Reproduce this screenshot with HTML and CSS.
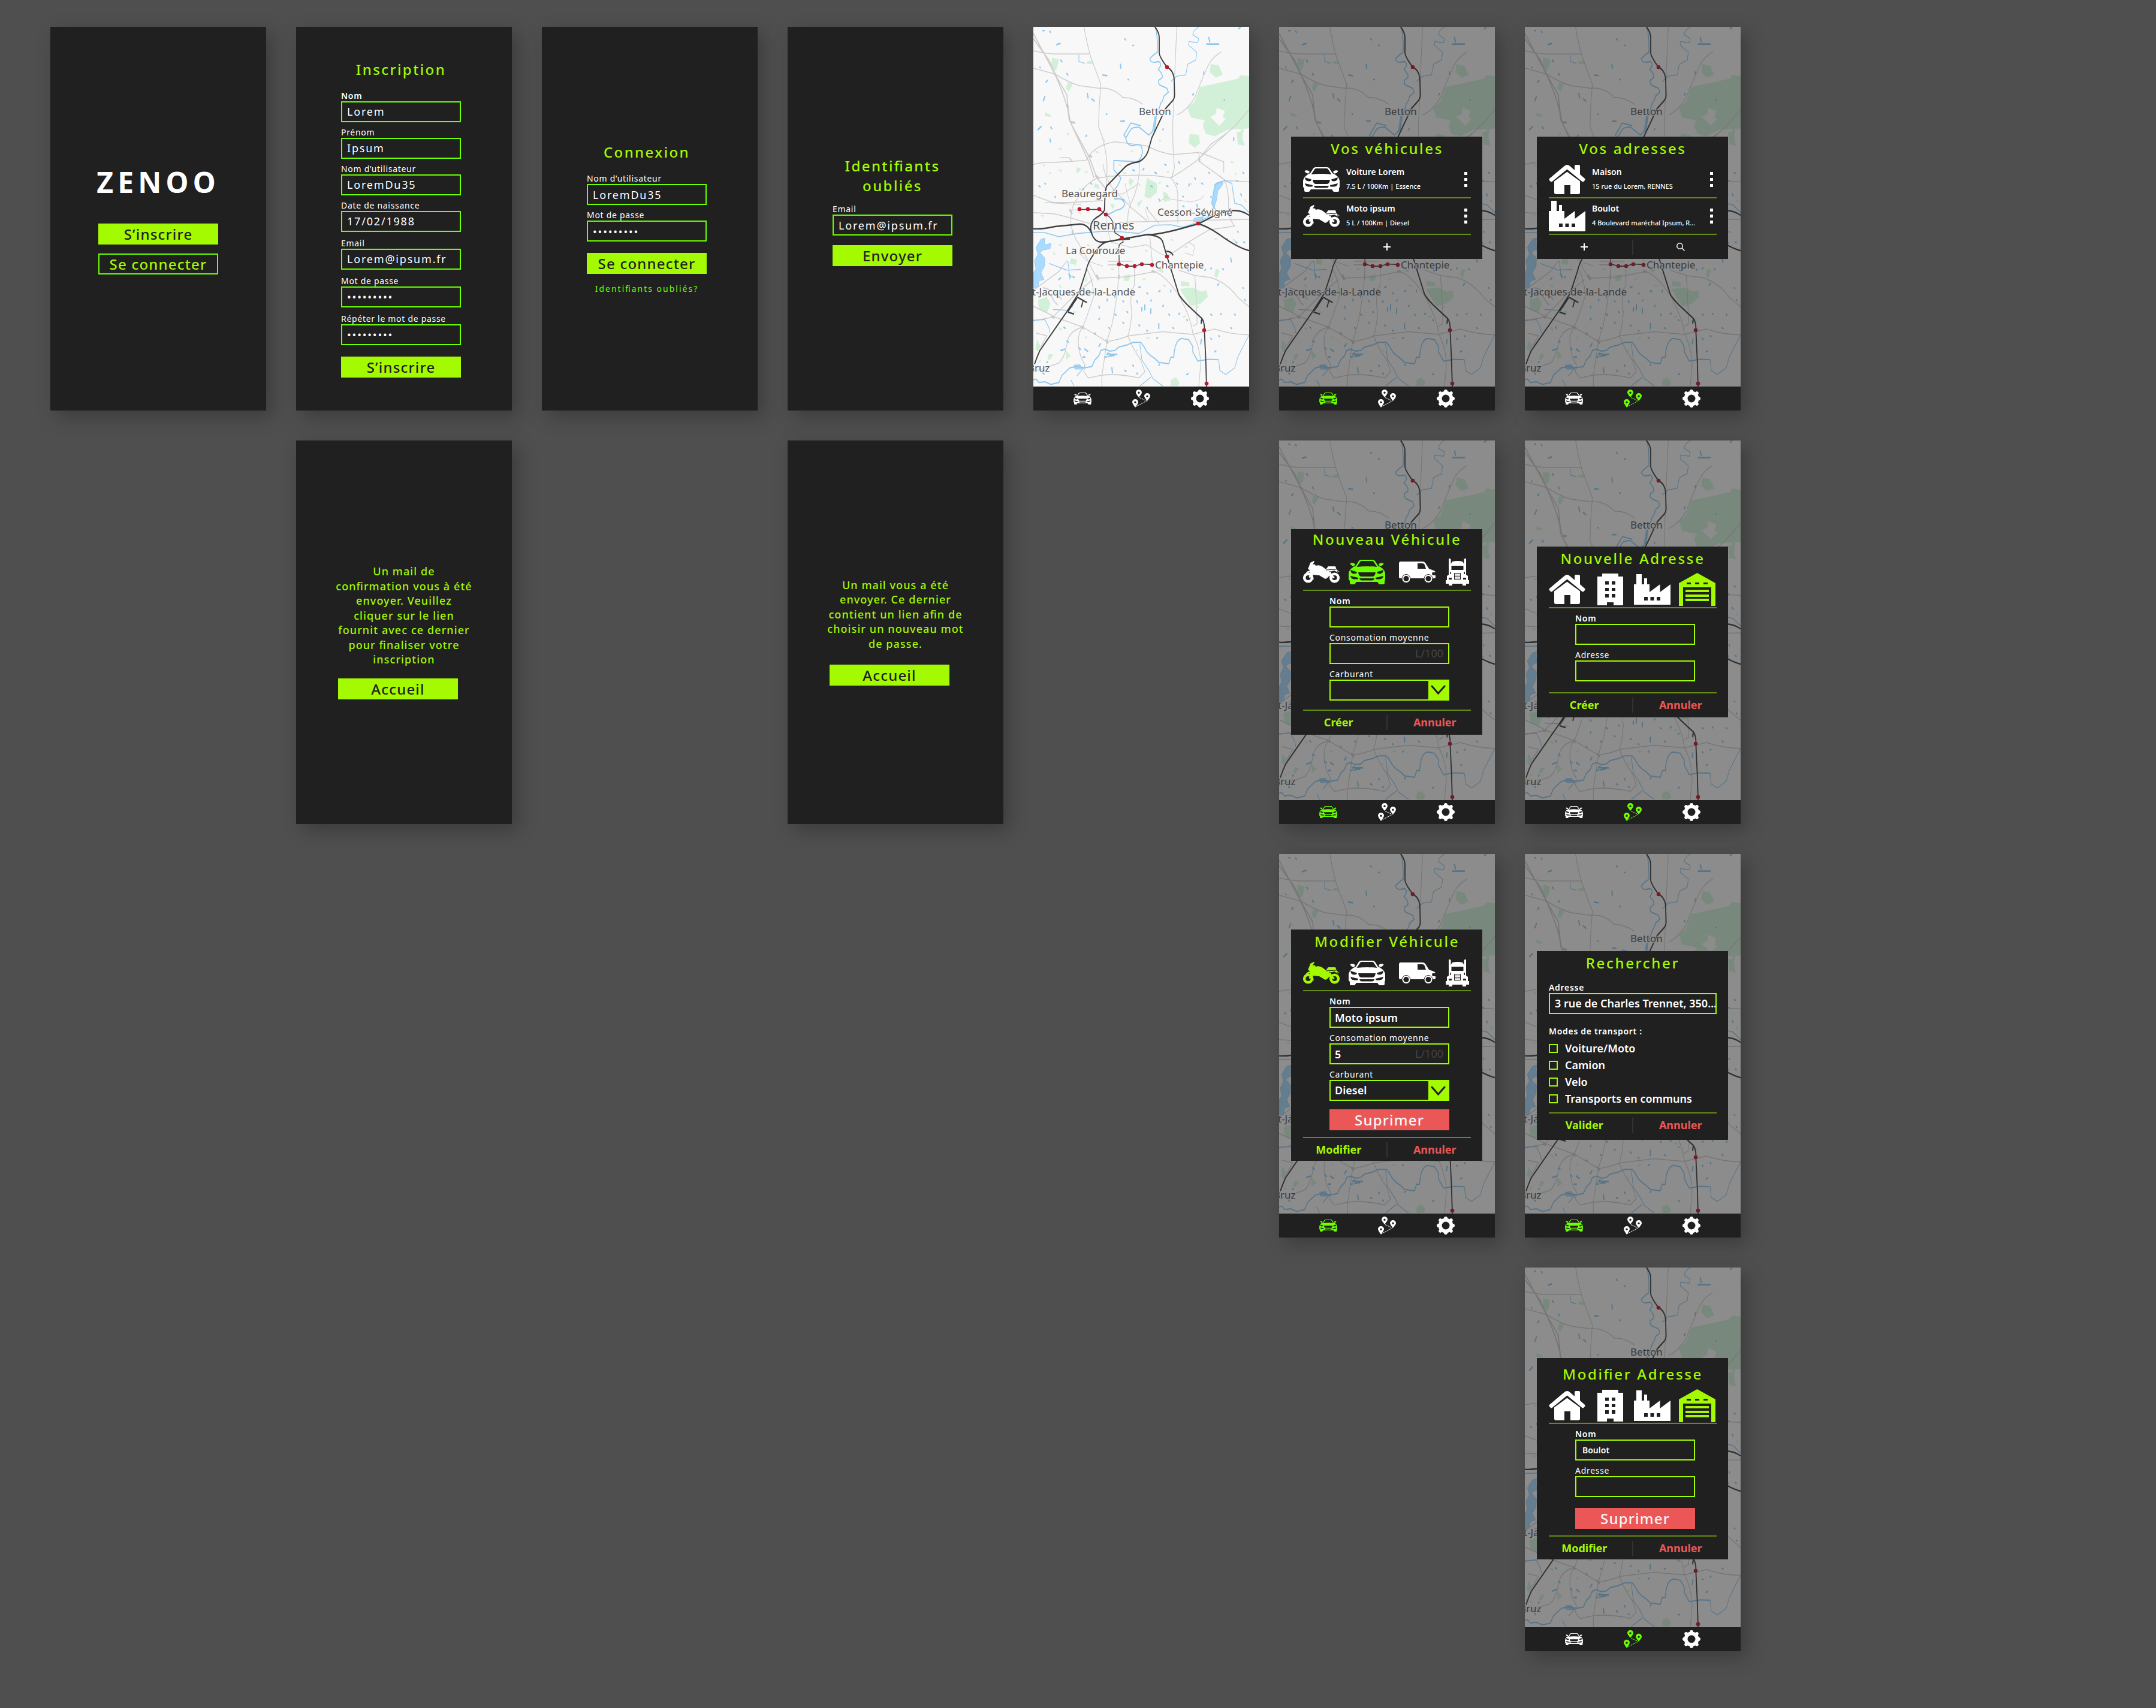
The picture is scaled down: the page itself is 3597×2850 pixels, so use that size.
FILE: index.html
```html
<!DOCTYPE html>
<html lang="fr">
<head>
<meta charset="utf-8">
<meta name="viewport" content="width=device-width, initial-scale=1">
<title>Zenoo</title>
<link rel="stylesheet" href="styles.css">
</head>
<body>
<svg class="sprite" aria-hidden="true">
  <symbol id="i-car" viewBox="0 0 61 41">
    <path fill="currentColor" d="M8 12L12 10L17 2Q18.500 0 21 0H40Q42.500 0 44 2L49 10L53 12L57 15Q61 19 61 24V33L60 35V39Q60 41 58 41H52Q50 41 49.500 39L48 37H13L11.500 39Q11 41 9 41H4Q2 41 2 39V35L0 33V24Q0 19 4 15Z"/>
    <path fill="currentColor" d="M2.500 6.500Q3.500 5 6 5.200Q10 5.500 11 8L9 10.500Q5 11 2.500 6.500ZM58.500 6.500Q57.500 5 55 5.200Q51 5.500 50 8L52 10.500Q56 11 58.500 6.500Z"/>
    <path fill="#202020" d="M13.500 12L19.500 3Q20.500 2 22 2H39Q40.500 2 41.500 3L47.500 12Q31 10 13.500 12ZM3 17L14 20.500Q13.500 23.500 10 23.500Q6 23.500 4 21ZM58 17L47 20.500Q47.500 23.500 51 23.500Q55 23.500 57 21ZM16 21H45Q44 28 40 28H21Q17 28 16 21ZM3 27L16 30L15.500 32.500H9Q4 32 3 27ZM58 27L45 30L45.500 32.500H52Q57 32 58 27ZM18 31H43Q42 34.500 39 34.500H22Q19 34.500 18 31Z"/>
  </symbol>
  <symbol id="i-moto" viewBox="0 0 61 37">
    <circle cx="8.500" cy="28" r="6.300" fill="none" stroke="currentColor" stroke-width="4.500"/>
    <circle cx="52.500" cy="28" r="6.300" fill="none" stroke="currentColor" stroke-width="4.500"/>
    <path fill="currentColor" d="M18 0L19 1L16 6Q18 5 20 6L21 8Q28 6 33 10L38 14L42 9H54L56 15L61 18L56 17L59 20L52 16L46 18L48 22L44 24Q41 29 37 30L27 24L16 23L18 31L14 28L10 24L12 19L4 21Q7 16 12 16L8 13L10 9L12 3Z"/>
    <path d="M10 27L16 24M44 23L52 28" stroke="currentColor" stroke-width="3"/>
    <path d="M38 15L55 14M43 18L50 18" stroke="#202020" stroke-width="1"/>
  </symbol>
  <symbol id="i-van" viewBox="0 0 61 35">
    <path fill="currentColor" d="M3 0H39Q43 0 45 4L50 12L58 15Q61 16 61 19V26Q61 28 58 28H2Q0 28 0 26V3Q0 0 3 0Z"/>
    <path fill="#202020" d="M31 3H39Q42 3 43 6L45 12H31ZM56 18H61V23H58Q55 23 55 20Z"/>
    <g fill="currentColor" stroke="#202020"><circle cx="12" cy="28.500" r="7"/><circle cx="49" cy="28.500" r="7"/></g>
    <g fill="#202020"><circle cx="12" cy="28.500" r="4.500"/><circle cx="49" cy="28.500" r="4.500"/></g>
  </symbol>
  <symbol id="i-truck" viewBox="0 0 39 45">
    <path fill="currentColor" d="M5 0H7L8.500 1V9L11 5Q20 3 28 5L30.500 9V1L32 0H34V27L37 29V36H39V42H34V45H28V42H11V45H5V42H0V36H2V29L5 27Z"/>
    <path fill="#202020" d="M9.500 12H29.500V19H9.500ZM7 22H8.500V26H7ZM30.500 22H32V26H30.500ZM5 32H10V35H5ZM29 32H34V35H29Z"/>
    <path d="M14.500 24.500H24.500V35H14.500ZM14.500 27.500H24.500M14.500 30H24.500M14.500 32.500H24.500" fill="none" stroke="#202020" stroke-width="1"/>
  </symbol>
  <symbol id="i-house" viewBox="0 0 61 49">
    <path fill="currentColor" d="M9 25L30.500 7L52 25V46Q52 49 49 49H36V34H26V49H12Q9 49 9 46Z"/>
    <path d="M2.500 26.500L30.500 6L58.500 26.500" fill="none" stroke="#202020" stroke-width="9"/>
    <path fill="currentColor" d="M1 23L26 2Q30.500 -2 35 2L43 9V2Q43 0 45 0H50Q52 0 52 2V16L60 23Q61 24.500 60 26L58 28Q57 29 55.500 28L30.500 7.500L5.500 28Q4 29 3 28L1 26Q0 24.500 1 23Z"/>
  </symbol>
  <symbol id="i-building" viewBox="0 0 43 53">
    <path fill="currentColor" fill-rule="evenodd" d="M0 5H8V0H35V5H43V53H27V48H16V53H0ZM13 13V18.500H19V13ZM24 13V18.500H30V13ZM13 24V29H19V24ZM24 24V29H30V24ZM13 34V40H19V34ZM24 34V40H30V34Z"/>
  </symbol>
  <symbol id="i-factory" viewBox="0 0 61 51">
    <path fill="currentColor" fill-rule="evenodd" d="M0 17H4V0H13V17H17V7H22V17H26V30L43.500 17V30L61 17V51H0ZM17 38V44H23V38ZM27.500 38V44H33.500V38ZM38 38V44H44V38Z"/>
  </symbol>
  <symbol id="i-garage" viewBox="0 0 61 55">
    <path fill="currentColor" fill-rule="evenodd" d="M30.500 0L61 17V55H54V24H7V55H0V17ZM13 16V19H20V16ZM27 16V19H34V16ZM41 16V19H48V16ZM11 28H50V32H11ZM11 36H50V40H11ZM11 43H50V47H11Z"/>
  </symbol>
  <symbol id="i-pins" viewBox="0 0 30 30">
    <path fill="currentColor" fill-rule="evenodd" d="M11 13Q6 7 6 5A5 5 0 0 1 16 5Q16 7 11 13ZM11 3.500A1.700 1.700 0 1 0 11 7A1.700 1.700 0 1 0 11 3.500ZM25 19Q20 13 20 11A5 5 0 0 1 30 11Q30 13 25 19ZM25 9.500A1.700 1.700 0 1 0 25 13A1.700 1.700 0 1 0 25 9.500ZM5 30Q0 23 0 21A5 5 0 0 1 10 21Q10 23 5 30ZM5 19.500A1.700 1.700 0 1 0 5 23A1.700 1.700 0 1 0 5 19.500Z"/>
    <path d="M12 13.500L24 19L6 28.500" fill="none" stroke="currentColor" stroke-dasharray="3 1"/>
  </symbol>
  <symbol id="i-gear" viewBox="0 0 30 30">
    <circle cx="15" cy="15" r="9.500" fill="none" stroke="currentColor" stroke-width="6"/>
    <g stroke="currentColor" stroke-width="6" stroke-linecap="round"><path d="M15 3V4M15 26V27M3 15H4M26 15H27"/><path stroke-width="5.500" d="M6 6L7 7M24 6L23 7M6 24L7 23M24 24L23 23"/></g>
  </symbol>
  <symbol id="i-plus" viewBox="0 0 12 12"><path d="M6 0V12M0 6H12" stroke="currentColor" stroke-width="2"/></symbol>
  <symbol id="i-search" viewBox="0 0 14 14"><circle cx="5.500" cy="5.500" r="4.700" fill="none" stroke="currentColor" stroke-width="1.500"/><path d="M9 9L13.500 13.500" stroke="currentColor" stroke-width="1.500"/></symbol>
  <symbol id="i-dots" viewBox="0 0 5 25"><path fill="currentColor" d="M0 0H5V5H0ZM0 10H5V15H0ZM0 20H5V25H0Z"/></symbol>
  <symbol id="i-chevron" viewBox="0 0 25 16"><path d="M2 2L12.500 14L23 2" fill="none" stroke="currentColor" stroke-width="3" stroke-linecap="round"/></symbol>

  <symbol id="map" viewBox="0 0 360 600">
    <rect width="360" height="600" fill="#f8f8f8"/>
    <g transform="scale(.33333 .44643) translate(-72 -56)">
      <g fill="#d2f0d8">
        <path d="M905 280L1020 262L1095 250L1110 235L1152 240V435L1045 440L980 465L935 455L920 425L930 405L860 395L843 358L880 335Z"/>
        <path fill="#f8f8f8" d="M990 358L1030 370L1020 395L1036 400L1003 425L958 392L985 382Z"/>
        <path d="M960 195L1000 200L1020 235L985 245L955 225ZM855 455L900 460L907 490L880 508L850 490ZM165 170L200 178L190 210L175 225L162 195ZM245 262L270 268L250 298L235 285ZM1090 450L1120 445V475L1130 500L1095 495ZM640 620L690 640L690 675L655 698L628 690ZM805 1035L870 1030L910 1045L940 1040L945 1065L910 1090L860 1100L830 1065ZM810 1005L850 1010L855 1025L810 1025ZM95 1075L140 1065L158 1090L140 1125L100 1110ZM525 985L560 980L550 1005L525 1005ZM760 1375L785 1365L805 1385L795 1398H760ZM90 1225L110 1250L95 1270L82 1258ZM985 960L1005 965L990 995L978 985ZM340 185L370 182L372 195H340ZM555 620L575 630L560 650L548 640ZM720 670L745 680L755 705L725 710ZM235 1265L260 1285L235 1300ZM150 1278L172 1280L155 1300H142ZM380 640L400 645V662L375 655ZM290 580L310 585L300 600H285ZM590 715L620 700L600 730ZM260 920L290 925L285 945L255 940ZM455 715L480 720L470 738ZM700 960H722V975L700 970ZM1110 420L1120 410L1125 450H1112ZM130 375L160 385V392L130 390Z"/>
      </g>
      <g fill="#a9daff" stroke="#8cc6ee" stroke-width="2">
        <path d="M110 850L130 845L128 870L160 865L155 885L120 890L105 900L130 920L128 950L110 975L125 1000L100 1005L95 1030L72 1035V975L85 960L78 930L95 905L85 880Z"/>
        <path d="M985 640L1015 632L1022 642L995 670L990 700L975 735L965 715L975 680ZM680 390L688 395L680 440L668 445ZM880 770L925 765L910 785L870 782ZM275 1320L305 1318L320 1335H280Z"/>
      </g>
      <path d="M120 1030L180 1045L215 1075M160 1060L180 1085L195 1095" fill="none" stroke="#d3d0e4" stroke-width="5"/>
      <g fill="none" stroke="#cdcdcd" stroke-width="3.500">
        <path stroke-width="5" d="M72 80L180 232L240 310Q248 390 262 420L350 540L390 620L440 665M72 100L150 180L180 232Q250 350 250 400L350 560L375 620"/>
        <path d="M72 145Q130 155 180 157H352M326 56Q340 120 360 170Q390 230 410 270Q400 350 398 430Q430 480 440 560Q442 620 436 660M72 210L180 232Q240 260 300 275L400 285Q470 280 520 320Q570 318 620 345"/>
        <path d="M790 56L782 190L772 380Q765 470 778 580Q770 610 762 620M1012 150Q960 170 935 220Q900 280 880 320Q840 370 790 385M1152 365Q1080 430 1045 450L960 495L905 545Q880 565 760 620Q680 610 600 610L490 612L395 620Q330 640 290 700Q255 730 260 800L285 850Q330 900 365 960L390 995L540 990L680 970Q740 990 800 1060Q860 1140 870 1200Q915 1270 908 1330L900 1400"/>
        <path d="M72 570Q120 560 180 562L335 555Q370 500 480 485L640 500Q700 525 770 533L900 525L905 560L1025 625Q1055 665 1048 740Q1055 780 1080 800M1025 600V560L905 525M905 560L1035 630L1152 635M1045 450L905 545"/>
        <path d="M72 685Q140 705 170 712H260L420 705M72 750L180 755L260 770L360 792Q450 790 540 785L820 780L1152 775M640 735L700 790M760 620Q790 640 795 680V790M605 565Q600 650 570 700Q540 740 545 790M420 570Q430 620 470 660L560 730L640 780"/>
        <path d="M72 1155L170 1140L290 1050L370 1000M72 1100Q130 1120 180 1140L320 1178L440 1232Q500 1225 550 1210L720 1195L870 1205L980 1185Q1060 1205 1152 1207"/>
        <path d="M500 900V990Q490 1080 465 1170L440 1232L415 1360V1400M578 955V1020Q550 1060 565 1120Q560 1180 545 1210Q570 1260 610 1300L630 1345M340 960Q370 1000 375 1060Q340 1140 320 1178Q280 1210 310 1290L330 1320L325 1345L348 1368L410 1358Q500 1350 600 1368L630 1345"/>
        <path d="M800 965L880 985L960 993Q1040 1010 1100 1070L1152 1102M880 985L885 1040L892 1165L870 1175M741 914L870 850L950 815L1080 800M85 1200L140 1210L110 1250M320 1178Q250 1190 240 1240Q230 1290 200 1312L72 1345M72 1040L200 970L240 930M445 932H560M445 945H520M655 840L670 955"/>
        <path stroke-width="2.500" d="M262 740H310V720M440 740V800L460 860L560 880L640 870M700 710L740 690L760 700L860 710L910 700L925 685M830 900L870 910L880 875L850 860M130 712L260 718L310 720M440 680H520L600 640M630 735L650 780M300 900L340 930L420 950M640 870L700 900L741 914M530 640L560 730"/>
        <path stroke-width="9" stroke-linecap="round" d="M178 230l4 4M262 412l16 2M350 538l12 2M385 612l12 8M256 740l8 12M268 820v8M390 985l8 14M500 985v10M436 1228l8 8M316 1176l8 6M165 1140l10 2M903 545v12M668 968l10 4"/>
      </g>
      <g fill="none" stroke="#8fc8ef" stroke-width="4.500" stroke-linejoin="round">
        <path d="M683 56Q695 90 693 150Q665 165 655 175Q660 195 700 185Q720 195 697 215Q720 230 717 245L700 255Q695 270 710 275L740 285L748 300L725 315Q720 335 710 340L700 365L685 395L678 440L650 460L600 430Q560 430 555 445L535 470L525 460L560 415L610 425M535 470Q540 500 570 500Q615 485 618 520Q615 550 590 560L475 555V590L510 620Q500 650 470 670L480 700Q520 690 530 720Q515 740 490 740L440 760"/>
        <path stroke-width="3.500" d="M72 825L130 825L200 840L290 828L420 820L520 822L600 828L680 797L760 795L820 805L900 785L960 760L985 740L965 715L980 645L1030 630L1065 640L1080 715L1115 722L1152 750"/>
        <path d="M72 1375L85 1372L100 1385L130 1382L160 1392L200 1385L215 1358L240 1340L255 1330L290 1325L330 1330L365 1325L380 1300L400 1285L410 1265L430 1260L455 1268L480 1265L500 1252L540 1245L570 1235L610 1235L625 1250L640 1270L660 1285L680 1295L700 1310L750 1315L760 1290L775 1290Q780 1225 815 1220L850 1225L870 1250V1270L895 1305L950 1298L1000 1300"/>
        <path stroke-width="3" d="M1000 1300L1005 1340L1035 1355L1080 1330L1095 1290L1125 1245L1152 1207M900 56Q870 70 870 85L900 100L895 115L850 110V125L890 150L885 180L845 195L835 235L790 240L760 260M605 1240L615 1300L650 1340L670 1370L720 1398M605 1398L660 1365M72 1152L130 1150L150 1180L155 1200M170 1112L240 1115L270 1100M300 160V185L330 192M208 545L250 545L265 555M150 940L240 965L310 962M245 930L255 1000M290 1360L330 1325M260 1375L275 1398"/>
      </g>
      <path fill="none" stroke="#8fc8ef" stroke-width="6" stroke-linecap="round" d="M120 70h6M155 72l3 4M188 122l18-4M136 262l6-6M130 316l-8 16M95 440l16-12M105 206l2 2M210 180l5 6M240 230l4 6M420 236l20 2M508 196l2 14M546 253h3M530 100l4 4M570 125h4M342 305l4 16M365 325l12 8M437 382h3M240 348l4 4M940 120h60M1100 62l8-4M950 95l5 16M925 225v8M870 310l4-5M1027 330h2M510 408h18M720 440l3-3M155 475l3 10M335 465l4-4M160 430l4 6M570 590l8 3M620 590l5-4M680 600l8 3M730 570l6 2M800 560l4 6M880 620l3 4M915 640l5 3M850 650l3-6M790 640l4 3M740 650l6 2M820 690h4M860 740l-5 16M740 745l12 3M700 700l4 3M950 600l4 3M1090 630l6 2M1110 680l4 6M1120 600l5 3M1075 470v10M1060 920l3 14M1095 820l2 3M1085 860l6 3M1125 860l5 2M1040 850l4-2M1020 960l4 3M960 960l3-3M930 965l4-3M845 965l5 3M600 1030l8-3M560 1045l4-8M480 1050v16M640 1050l4 3M700 1045l6-3M760 1040v6M660 1080l3-3M590 1080l3 6M520 1080l4 3M440 1080l3-6M400 1100l3 6M660 1110v16M630 1095v18M615 1105v12M540 1120l4 3M480 1130l6 3M750 1130l4 3M720 1100l4-3M800 1130l4-4M840 1150l3 3M700 1165v18M770 1180l5 3M690 1220l4-3M640 1190l3 3M600 1170l4 3M520 1160l4 3M400 1150l3-5M450 1180l3 3M380 1200l3 3M225 1178l6 4M330 1260l14 8M400 1250l8-10M430 1290l40-6M440 1280l50 0M445 1275l30 10M465 1330l3 18M530 1340l6 3M570 1320l3 4M700 1320l3-3M590 1350l4 3M840 1355l6-3M980 1270l6-3M910 1240l3-16M960 1220l4 3M1000 1210l3 3M1060 1180l4 3M1080 1130l3 3M1010 1130l3-3M960 1130l5 3M1120 1030l3 3M1130 1075l3 3M320 1290l10 0M300 1255l8 6M210 1265l20-5M240 1230l8 4M120 1350l5 3M140 1310l3-3M190 1060l8 5M230 1050l3-3M200 1000l8-6M250 980l10 10M270 990l6 2M1000 1015l-5 6M910 1155l4 3M960 690l3 3M890 720l3 8M820 725l6 3M660 650l8 4M640 730l3 3M520 700l6 3M360 640l4 3M320 660l3 3M130 640l3 3M100 650l6 3M180 690l3 3"/>
      <path fill="none" stroke="#d0f0d5" stroke-width="6" d="M500 570l12 4M520 600l18 4M570 660l8-8M600 640l6 10M700 640l10-3M740 600l12-4M820 590l-8 10M860 640l6 5M450 610l12 6M330 600l14-4M300 660l12 6M200 590l14 6M150 600l10 3M120 575l10-3M380 520l20 6M420 470l10 16M200 510l14 3M240 460l12-8M560 520l14 3M700 480l10 3M1060 560l14 3M1080 600l8 8M950 540l12-3M130 700l12 4M110 760l14 3M300 750l10 3M340 990l-8 20M460 960l16 3M620 1000l12-3M200 1020l12 10M270 1120l14 3M200 1180l14 8M330 1220l10-6M100 1310l8-8M440 1290l12-10M580 1270l14-6M640 1220l14-3M820 1140l14-3M880 1100l20 3M720 1020l14 6M760 850l14 4M830 880l14-3M980 850l12-4M1070 850l14 6M1130 700l8 12M1010 740l14 6M560 930l10 4M630 890l14 4M340 870l14 3M200 870l16 3M170 900l12 6"/>
      <g fill="none" stroke="#404040" stroke-width="5.500" stroke-linejoin="round">
        <path d="M680 56Q703 75 702 100V150Q700 165 740 205Q778 220 777 260L779 310Q779 325 765 335L735 360Q700 415 665 470L650 510Q640 545 600 560Q550 565 530 580L440 650Q430 665 430 700L428 740Q420 755 385 770Q355 785 360 815Q370 858 410 860Q440 860 470 855L640 832Q680 835 800 812L898 792L960 768Q1080 720 1152 760"/>
        <path d="M72 810Q110 813 180 802L300 793Q345 790 365 830M898 792Q940 800 1000 830Q1090 880 1152 892M440 858Q400 870 370 910Q345 935 335 970L300 1050L240 1120L105 1265Q90 1290 78 1316M640 832Q710 835 720 860L741 914L800 1055Q810 1070 850 1100L915 1145Q930 1160 928 1190L935 1300L939 1400M292 1066L340 1086M322 1076L312 1104M245 1122L276 1129M738 895Q760 893 772 910M915 1148L912 1166"/>
        <path stroke-width="8" d="M500 850L555 847M290 1068L245 1118"/>
        <path stroke-width="3.500" d="M304 738H402L435 757Q475 770 480 825L517 843L522 860Q500 865 500 880L502 942L540 950H580L614 942L666 944"/>
      </g>
    </g>
    <g fill="#c2172f"><circle cx="223" cy="67" r="3.300"/><circle cx="77" cy="304" r="3.300"/><circle cx="91" cy="304" r="3.300"/><circle cx="110" cy="304" r="3.300"/><circle cx="121" cy="313" r="3.300"/><circle cx="148" cy="352" r="3.300"/><circle cx="143" cy="396" r="3.300"/><circle cx="156" cy="399" r="3.300"/><circle cx="169" cy="399" r="3.300"/><circle cx="181" cy="396" r="3.300"/><circle cx="198" cy="397" r="3.300"/><circle cx="275" cy="328" r="3.300"/><circle cx="223" cy="383" r="3.300"/><circle cx="285" cy="506" r="3.300"/><circle cx="289" cy="595" r="3.300"/></g>
  </symbol>
</svg>

<main class="board">
  <section class="screen form-screen c1 r1">
    <h1 class="brand">ZENOO</h1>
    <div class="actions">
      <button class="btn" type="button">S’inscrire</button>
      <button class="btn btn-outline" type="button">Se connecter</button>
    </div>
  </section>

  <form class="screen form-screen shifted c2 r1">
    <h2 class="title">Inscription</h2>
    <div class="fields">
      <div class="field"><label class="strong" for="s-nom">Nom</label><input id="s-nom" type="text" value="Lorem"></div>
      <div class="field"><label for="s-prenom">Prénom</label><input id="s-prenom" type="text" value="Ipsum"></div>
      <div class="field"><label for="s-user">Nom d’utilisateur</label><input id="s-user" type="text" value="LoremDu35"></div>
      <div class="field"><label for="s-date">Date de naissance</label><input id="s-date" type="text" value="17/02/1988"></div>
    </div>
    <div class="fields account">
      <div class="field"><label for="s-mail">Email</label><input id="s-mail" type="email" value="Lorem@ipsum.fr"></div>
      <div class="field"><label for="s-pass">Mot de passe</label><input id="s-pass" type="password" value="motdepass"></div>
      <div class="field"><label for="s-pass2">Répéter le mot de passe</label><input id="s-pass2" type="password" value="motdepass"></div>
    </div>
    <button class="btn after-fields" type="button">S’inscrire</button>
  </form>

  <form class="screen form-screen shifted c3 r1">
    <h2 class="title">Connexion</h2>
    <div class="fields">
      <div class="field"><label for="l-user">Nom d’utilisateur</label><input id="l-user" type="text" value="LoremDu35"></div>
      <div class="field"><label for="l-pass">Mot de passe</label><input id="l-pass" type="password" value="motdepass"></div>
    </div>
    <button class="btn after-fields" type="button">Se connecter</button>
    <a class="forgot" href="#oublies">Identifiants oubliés?</a>
  </form>

  <form class="screen form-screen shifted recover c4 r1" id="oublies">
    <h2 class="title">Identifiants oubliés</h2>
    <div class="fields">
      <div class="field"><label for="r-mail">Email</label><input id="r-mail" type="email" value="Lorem@ipsum.fr"></div>
    </div>
    <button class="btn" type="button">Envoyer</button>
  </form>

  <section class="screen c5 r1">
    <svg class="map" viewBox="0 0 360 600" role="img" aria-label="Carte de Rennes"><use href="#map"/>
      <text x="176" y="147">Betton</text><text x="47" y="284">Beauregard</text><text x="207" y="315">Cesson-Sévigné</text><text class="city" x="99" y="338">Rennes</text><text x="54" y="379">La Courouze</text><text x="203" y="403">Chantepie</text><text x="-2" y="448">t-Jacques-de-la-Lande</text><text x="-9" y="575">Bruz</text>
    </svg>
    <nav class="tabs"><a href="#vehicules" aria-label="Véhicules"><svg class="tab-car"><use href="#i-car"/></svg></a><a href="#adresses" aria-label="Adresses"><svg><use href="#i-pins"/></svg></a><a href="#reglages" aria-label="Réglages"><svg><use href="#i-gear"/></svg></a></nav>
  </section>

  <section class="screen c6 r1" id="vehicules">
    <svg class="map" viewBox="0 0 360 600" role="img" aria-label="Carte de Rennes"><use href="#map"/><text x="176" y="147">Betton</text><text x="203" y="403">Chantepie</text><text x="-2" y="448">t-Jacques-de-la-Lande</text><text x="-9" y="575">Bruz</text></svg>
    <div class="overlay overlay-list">
      <section class="dialog dialog-list">
        <h2 class="title">Vos véhicules</h2>
        <ul class="items">
          <li><svg class="w-car"><use href="#i-car"/></svg><div class="item-text"><b>Voiture Lorem</b><small>7.5 L / 100Km | Essence</small></div><button type="button" class="more" aria-label="Options"><svg><use href="#i-dots"/></svg></button></li>
          <li><svg class="w-moto"><use href="#i-moto"/></svg><div class="item-text"><b>Moto ipsum</b><small>5 L / 100Km | Diesel</small></div><button type="button" class="more" aria-label="Options"><svg><use href="#i-dots"/></svg></button></li>
        </ul>
        <footer class="foot"><button type="button" aria-label="Ajouter"><svg class="plus"><use href="#i-plus"/></svg></button></footer>
      </section>
    </div>
    <nav class="tabs"><a class="active" href="#vehicules" aria-label="Véhicules"><svg class="tab-car"><use href="#i-car"/></svg></a><a href="#adresses" aria-label="Adresses"><svg><use href="#i-pins"/></svg></a><a href="#reglages" aria-label="Réglages"><svg><use href="#i-gear"/></svg></a></nav>
  </section>

  <section class="screen c7 r1" id="adresses">
    <svg class="map" viewBox="0 0 360 600" role="img" aria-label="Carte de Rennes"><use href="#map"/><text x="176" y="147">Betton</text><text x="203" y="403">Chantepie</text><text x="-2" y="448">t-Jacques-de-la-Lande</text><text x="-9" y="575">Bruz</text></svg>
    <div class="overlay overlay-list">
      <section class="dialog dialog-list">
        <h2 class="title">Vos adresses</h2>
        <ul class="items">
          <li><svg class="w-house"><use href="#i-house"/></svg><div class="item-text"><b>Maison</b><small>15 rue du Lorem, RENNES</small></div><button type="button" class="more" aria-label="Options"><svg><use href="#i-dots"/></svg></button></li>
          <li><svg class="w-factory"><use href="#i-factory"/></svg><div class="item-text"><b>Boulot</b><small>4 Boulevard maréchal Ipsum, R...</small></div><button type="button" class="more" aria-label="Options"><svg><use href="#i-dots"/></svg></button></li>
        </ul>
        <footer class="foot"><button type="button" aria-label="Ajouter"><svg class="plus"><use href="#i-plus"/></svg></button><i></i><button type="button" aria-label="Rechercher"><svg class="glass"><use href="#i-search"/></svg></button></footer>
      </section>
    </div>
    <nav class="tabs"><a href="#vehicules" aria-label="Véhicules"><svg class="tab-car"><use href="#i-car"/></svg></a><a class="active" href="#adresses" aria-label="Adresses"><svg><use href="#i-pins"/></svg></a><a href="#reglages" aria-label="Réglages"><svg><use href="#i-gear"/></svg></a></nav>
  </section>

  <section class="screen form-screen message c2 r2">
    <p>Un mail de confirmation vous à été envoyer. Veuillez cliquer sur le lien fournit avec ce dernier pour finaliser votre inscription</p>
    <button class="btn" type="button">Accueil</button>
  </section>

  <section class="screen form-screen message roomy c4 r2">
    <p>Un mail vous a été envoyer. Ce dernier contient un lien afin de choisir un nouveau mot de passe.</p>
    <button class="btn" type="button">Accueil</button>
  </section>

  <section class="screen c6 r2">
    <svg class="map" viewBox="0 0 360 600" role="img" aria-label="Carte de Rennes"><use href="#map"/><text x="176" y="147">Betton</text><text x="-2" y="448">t-Ja</text><text x="-9" y="575">Bruz</text></svg>
    <div class="overlay">
      <form class="dialog dialog-new">
        <h2 class="title">Nouveau Véhicule</h2>
        <div class="picker vehicles">
          <button type="button" aria-label="Moto"><svg class="w-moto"><use href="#i-moto"/></svg></button><button type="button" class="chosen-green" aria-label="Voiture"><svg class="w-car"><use href="#i-car"/></svg></button><button type="button" aria-label="Utilitaire"><svg class="w-van"><use href="#i-van"/></svg></button><button type="button" aria-label="Camion"><svg class="w-truck"><use href="#i-truck"/></svg></button>
        </div>
        <div class="fields">
          <div class="field"><label class="strong" for="nv-nom">Nom</label><input id="nv-nom" type="text"></div>
          <div class="field"><label for="nv-conso">Consomation moyenne</label><div class="box"><input id="nv-conso" type="text"><span class="unit">L/100</span></div></div>
          <div class="field"><label for="nv-carb">Carburant</label><div class="box"><select id="nv-carb"><option></option></select><span class="arrow"><svg><use href="#i-chevron"/></svg></span></div></div>
        </div>
        <hr class="rule">
        <footer class="foot"><button type="button">Créer</button><i></i><button type="button" class="cancel">Annuler</button></footer>
      </form>
    </div>
    <nav class="tabs"><a class="active" href="#vehicules" aria-label="Véhicules"><svg class="tab-car"><use href="#i-car"/></svg></a><a href="#adresses" aria-label="Adresses"><svg><use href="#i-pins"/></svg></a><a href="#reglages" aria-label="Réglages"><svg><use href="#i-gear"/></svg></a></nav>
  </section>

  <section class="screen c7 r2">
    <svg class="map" viewBox="0 0 360 600" role="img" aria-label="Carte de Rennes"><use href="#map"/><text x="176" y="147">Betton</text><text x="-2" y="448">t-Ja</text><text x="-9" y="575">Bruz</text></svg>
    <div class="overlay">
      <form class="dialog dialog-address">
        <h2 class="title">Nouvelle Adresse</h2>
        <div class="picker places">
          <button type="button" aria-label="Maison"><svg class="w-house"><use href="#i-house"/></svg></button><button type="button" aria-label="Immeuble"><svg class="w-building"><use href="#i-building"/></svg></button><button type="button" aria-label="Usine"><svg class="w-factory"><use href="#i-factory"/></svg></button><button type="button" class="chosen" aria-label="Entrepôt"><svg class="w-garage"><use href="#i-garage"/></svg></button>
        </div>
        <div class="fields">
          <div class="field"><label class="strong" for="na-nom">Nom</label><input id="na-nom" type="text"></div>
          <div class="field"><label for="na-adr">Adresse</label><input id="na-adr" type="text"></div>
        </div>
        <hr class="rule">
        <footer class="foot"><button type="button">Créer</button><i></i><button type="button" class="cancel">Annuler</button></footer>
      </form>
    </div>
    <nav class="tabs"><a href="#vehicules" aria-label="Véhicules"><svg class="tab-car"><use href="#i-car"/></svg></a><a class="active" href="#adresses" aria-label="Adresses"><svg><use href="#i-pins"/></svg></a><a href="#reglages" aria-label="Réglages"><svg><use href="#i-gear"/></svg></a></nav>
  </section>

  <section class="screen c6 r3">
    <svg class="map" viewBox="0 0 360 600" role="img" aria-label="Carte de Rennes"><use href="#map"/><text x="-2" y="448">t-Ja</text><text x="-9" y="575">Bruz</text></svg>
    <div class="overlay">
      <form class="dialog dialog-edit">
        <h2 class="title">Modifier Véhicule</h2>
        <div class="picker vehicles">
          <button type="button" class="chosen" aria-label="Moto"><svg class="w-moto"><use href="#i-moto"/></svg></button><button type="button" aria-label="Voiture"><svg class="w-car"><use href="#i-car"/></svg></button><button type="button" aria-label="Utilitaire"><svg class="w-van"><use href="#i-van"/></svg></button><button type="button" aria-label="Camion"><svg class="w-truck"><use href="#i-truck"/></svg></button>
        </div>
        <div class="fields">
          <div class="field"><label class="strong" for="mv-nom">Nom</label><input id="mv-nom" type="text" value="Moto ipsum"></div>
          <div class="field"><label for="mv-conso">Consomation moyenne</label><div class="box"><input id="mv-conso" type="text" value="5"><span class="unit">L/100</span></div></div>
          <div class="field"><label for="mv-carb">Carburant</label><div class="box"><select id="mv-carb"><option>Diesel</option></select><span class="arrow"><svg><use href="#i-chevron"/></svg></span></div></div>
        </div>
        <button class="btn btn-danger" type="button">Suprimer</button>
        <hr class="rule">
        <footer class="foot"><button type="button">Modifier</button><i></i><button type="button" class="cancel">Annuler</button></footer>
      </form>
    </div>
    <nav class="tabs"><a class="active" href="#vehicules" aria-label="Véhicules"><svg class="tab-car"><use href="#i-car"/></svg></a><a href="#adresses" aria-label="Adresses"><svg><use href="#i-pins"/></svg></a><a href="#reglages" aria-label="Réglages"><svg><use href="#i-gear"/></svg></a></nav>
  </section>

  <section class="screen c7 r3">
    <svg class="map" viewBox="0 0 360 600" role="img" aria-label="Carte de Rennes"><use href="#map"/><text x="176" y="147">Betton</text><text x="-2" y="448">t-Ja</text><text x="-9" y="575">Bruz</text></svg>
    <div class="overlay">
      <form class="dialog dialog-search">
        <h2 class="title">Rechercher</h2>
        <div class="field"><label class="strong" for="re-adr">Adresse</label><input id="re-adr" type="text" value="3 rue de Charles Trennet, 350..."></div>
        <fieldset class="modes">
          <legend>Modes de transport :</legend>
          <label><input type="checkbox">Voiture/Moto</label>
          <label><input type="checkbox">Camion</label>
          <label><input type="checkbox">Velo</label>
          <label><input type="checkbox">Transports en communs</label>
        </fieldset>
        <hr class="rule">
        <footer class="foot"><button type="button">Valider</button><i></i><button type="button" class="cancel">Annuler</button></footer>
      </form>
    </div>
    <nav class="tabs"><a class="active" href="#vehicules" aria-label="Véhicules"><svg class="tab-car"><use href="#i-car"/></svg></a><a href="#adresses" aria-label="Adresses"><svg><use href="#i-pins"/></svg></a><a href="#reglages" aria-label="Réglages"><svg><use href="#i-gear"/></svg></a></nav>
  </section>

  <section class="screen c7 r4">
    <svg class="map" viewBox="0 0 360 600" role="img" aria-label="Carte de Rennes"><use href="#map"/><text x="176" y="147">Betton</text><text x="-2" y="448">t-Ja</text><text x="-9" y="575">Bruz</text></svg>
    <div class="overlay">
      <form class="dialog dialog-address dialog-edit-address">
        <h2 class="title">Modifier Adresse</h2>
        <div class="picker places">
          <button type="button" aria-label="Maison"><svg class="w-house"><use href="#i-house"/></svg></button><button type="button" aria-label="Immeuble"><svg class="w-building"><use href="#i-building"/></svg></button><button type="button" aria-label="Usine"><svg class="w-factory"><use href="#i-factory"/></svg></button><button type="button" class="chosen" aria-label="Entrepôt"><svg class="w-garage"><use href="#i-garage"/></svg></button>
        </div>
        <div class="fields">
          <div class="field"><label class="strong" for="ma-nom">Nom</label><input class="small" id="ma-nom" type="text" value="Boulot"></div>
          <div class="field"><label for="ma-adr">Adresse</label><input id="ma-adr" type="text"></div>
        </div>
        <button class="btn btn-danger" type="button">Suprimer</button>
        <hr class="rule">
        <footer class="foot"><button type="button">Modifier</button><i></i><button type="button" class="cancel">Annuler</button></footer>
      </form>
    </div>
    <nav class="tabs"><a href="#vehicules" aria-label="Véhicules"><svg class="tab-car"><use href="#i-car"/></svg></a><a class="active" href="#adresses" aria-label="Adresses"><svg><use href="#i-pins"/></svg></a><a href="#reglages" aria-label="Réglages"><svg><use href="#i-gear"/></svg></a></nav>
  </section>
</main>
</body>
</html>
```
FILE: styles.css
```css
:root {
  --dark: #202020;
  --lime: #a4fa00;
  --green: #6cff00;
  --red: #eb5757;
}

* { box-sizing: border-box; }

body {
  margin: 0;
  min-height: 100vh;
  background: #4f4f4f;
  color: #fff;
  font-family: "Noto Sans", "Open Sans", sans-serif;
  font-size: 14px;
  line-height: 19px;
  font-feature-settings: "liga" 1;
}

button, input, select {
  font: inherit;
  color: inherit;
  background: none;
  border: 0;
  border-radius: 0;
  padding: 0;
  margin: 0;
  font-feature-settings: inherit;
}

h1, h2, p, ul, fieldset, hr { margin: 0; padding: 0; border: 0; }
svg { display: block; }
.sprite { position: absolute; width: 0; height: 0; }

/* Board */
.board {
  display: grid;
  grid-template-columns: repeat(7, 360px);
  grid-auto-rows: minmax(640px, auto);
  gap: 50px;
  padding: 45px 84px;
}
.c1 { grid-column: 1; } .c2 { grid-column: 2; } .c3 { grid-column: 3; }
.c4 { grid-column: 4; } .c5 { grid-column: 5; } .c6 { grid-column: 6; }
.c7 { grid-column: 7; }
.r1 { grid-row: 1; } .r2 { grid-row: 2; } .r3 { grid-row: 3; } .r4 { grid-row: 4; }

.screen {
  position: relative;
  display: flex;
  flex-direction: column;
  background: var(--dark);
  box-shadow: 10px 10px 30px rgba(0, 0, 0, .25);
}

/* Plain screens */
.form-screen { justify-content: center; padding: 0 80px 2px; }
.shifted { padding: 0 85px 2px 75px; }
.recover { padding-bottom: 26px; }

.brand {
  font-size: 48px;
  line-height: 65px;
  font-weight: 700;
  letter-spacing: .15em;
  text-align: center;
  margin: 0 -10px 37px;
}
.actions { display: flex; flex-direction: column; gap: 15px; }

.title {
  color: var(--lime);
  font-size: 24px;
  line-height: 33px;
  font-weight: 500;
  letter-spacing: .1em;
  text-align: center;
}
.form-screen .title { margin-bottom: 18px; }
.recover .title { margin-bottom: 13px; }

.btn {
  height: 35px;
  width: 200px;
  background: var(--lime);
  color: var(--dark);
  font-size: 24px;
  line-height: 33px;
  font-weight: 500;
  letter-spacing: .05em;
  text-align: center;
}
.btn-outline { background: none; border: 2px solid var(--green); color: var(--lime); line-height: 29px; }
.btn-danger { background: var(--red); color: #f8f8f8; }
.after-fields { margin-top: 19px; }
.recover .btn { margin-top: 16px; }

.fields { display: flex; flex-direction: column; gap: 7px; }
.account { gap: 9px; margin-top: 9px; }
.field { display: flex; flex-direction: column; }
.field label, .modes legend { letter-spacing: .05em; line-height: 19px; }
.field label.strong, .modes legend { font-weight: 600; }
.field > input, .box {
  height: 35px;
  width: 100%;
  border: 2px solid var(--green);
}
.field input { padding: 0 8px; font-size: 18px; letter-spacing: .1em; }

.forgot {
  align-self: center;
  margin-top: 15px;
  color: var(--green);
  letter-spacing: 2px;
  text-decoration: none;
}

.message { align-items: center; padding: 0 0 2px; }
.message p {
  width: 230px;
  color: var(--lime);
  font-size: 18px;
  line-height: 1.36;
  font-weight: 500;
  letter-spacing: .06em;
  text-align: center;
}
.message .btn { margin: 19px 20px 0 0; }
.roomy .btn { margin-top: 23px; }

/* Map screens */
.map { width: 100%; flex: 1; display: block; }
.map text {
  font-size: 17px;
  fill: #555;
  stroke: #f8f8f8;
  stroke-width: 2px;
  stroke-linejoin: round;
  paint-order: stroke;
}
.map .city { font-size: 20px; }

.overlay {
  position: absolute;
  inset: 0;
  display: flex;
  flex-direction: column;
  justify-content: center;
  padding: 0 21px 2px 20px;
  background: rgba(32, 32, 32, .5);
}
.overlay-list { padding-bottom: 70px; }

.tabs {
  position: relative;
  height: 40px;
  display: flex;
  justify-content: center;
  align-items: center;
  gap: 68px;
  background: var(--dark);
}
.tabs a { color: #fff; display: block; }
.tabs a.active { color: var(--green); }
.tabs svg { width: 30px; height: 30px; }
.tabs .tab-car { height: 20px; }

/* Dialogs */
.dialog { background: var(--dark); padding: 3px 19px 0 20px; }
.dialog .title { letter-spacing: .11em; }
.dialog .fields { width: 200px; margin: 7px 0 0 44px; }
.dialog .field > input, .dialog .box { border-color: var(--lime); }
.dialog .field input, .dialog select { padding: 0 7px; font-weight: 600; letter-spacing: 0; font-size: 18px; }
.dialog .field input.small { font-size: 14px; padding: 0 10px; }

.dialog-list .title { margin-bottom: 6px; }
.items { list-style: none; }
.items li {
  display: flex;
  align-items: center;
  height: 61px;
  border-bottom: 2px solid #628c12;
}
.item-text { margin-left: 11px; padding-bottom: 4px; flex: 1; display: flex; flex-direction: column; gap: 7px; white-space: nowrap; }
.item-text b { font-size: 14px; font-weight: 600; line-height: 19px; }
.item-text small { font-size: 11px; font-weight: 500; line-height: 15px; }
.more { margin-right: 6px; }
.more svg { width: 5px; height: 25px; }

.w-car { width: 61px; height: 41px; }
.w-moto { width: 61px; height: 37px; }
.w-van { width: 61px; height: 35px; }
.w-truck { width: 39px; height: 45px; }
.w-house { width: 61px; height: 49px; }
.w-building { width: 43px; height: 53px; }
.w-factory { width: 61px; height: 51px; }
.w-garage { width: 61px; height: 55px; }
.plus { width: 12px; height: 12px; }
.glass { width: 14px; height: 14px; }

.picker {
  display: grid;
  align-items: center;
  height: 67px;
  padding-top: 7px;
  border-bottom: 2px solid #628c12;
}
.vehicles { grid-template-columns: 76px 84px 78px 39px; }
.places { grid-template-columns: 81px 61px 75px 61px; }
.picker button { justify-self: start; }
.dialog-new { padding-top: 0; }
.dialog-new .title { margin-bottom: 3px; }
.chosen { color: var(--lime); }
.chosen-green { color: var(--green); }

.box { display: flex; align-items: center; }
.box input, .box select { flex: 1; min-width: 0; height: 100%; }
.box select { appearance: none; outline: 0; }
.unit { color: #444; font-size: 18px; line-height: 25px; padding-right: 8px; }
.arrow { align-self: stretch; width: 33px; background: var(--lime); color: var(--dark); display: grid; place-items: center; }
.arrow svg { width: 25px; height: 16px; }

.rule { height: 2px; background: #628c12; margin-top: 15px; }
.dialog-address .rule { margin-top: 18px; }
.dialog .btn-danger { display: block; margin: 14px 0 0 44px; }
.dialog-edit .rule, .dialog-edit-address .rule { margin-top: 11px; }
.dialog-edit-address { padding-top: 10px; }
.dialog-edit-address .btn-danger { margin-top: 18px; }

.foot { display: flex; align-items: center; height: 40px; margin: 0 -19px 0 -20px; }
.foot button { flex: 1; display: grid; place-items: center; color: #fff; font-size: 18px; line-height: 25px; font-weight: 700; }
form .foot button { color: var(--lime); }
form .foot .cancel { color: var(--red); }
.foot i { width: 2px; height: 25px; background: #333; }
.dialog-edit .foot, .dialog-edit-address .foot { height: 38px; }

.dialog-search { padding-bottom: 4px; }
.dialog-search .field { margin-top: 15px; }
.dialog-search .field input { padding: 0 0 0 8px; }
.modes { margin-top: 19px; display: flex; flex-direction: column; }
.modes legend { padding: 0; margin-bottom: 6px; }
.modes label { display: flex; align-items: center; gap: 12px; height: 28px; font-size: 18px; line-height: 25px; font-weight: 600; }
.modes input { appearance: none; width: 15px; height: 15px; border: 2px solid var(--lime); }
.dialog-search .rule { margin-top: 8px; }
```
